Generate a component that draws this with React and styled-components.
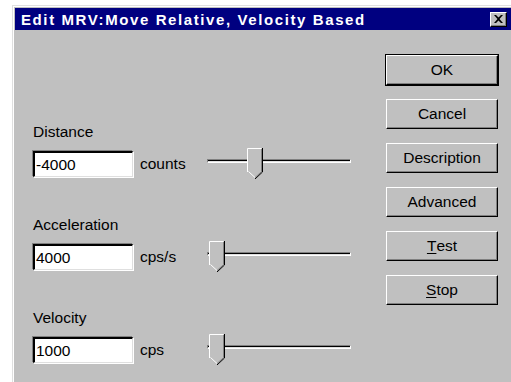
import React from "react"
import styled, { createGlobalStyle } from "styled-components"

const Global = createGlobalStyle`
  html, body {
    margin: 0;
    padding: 0;
    background: #fff;
    overflow: hidden;
  }
`

const fields = [
  { label: "Distance", value: "-4000", unit: "counts", pos: 40 },
  { label: "Acceleration", value: "4000", unit: "cps/s", pos: 2 },
  { label: "Velocity", value: "1000", unit: "cps", pos: 2 },
]

const buttons = [
  { text: "OK", isDefault: true },
  { text: "Cancel" },
  { text: "Description" },
  { text: "Advanced" },
  { text: "Test", key: "T" },
  { text: "Stop", key: "S" },
]

const Thumb = ({ pos }) => (
  <ThumbSvg style={{ left: pos }} width="16" height="31" viewBox="0 0 16 31">
    <path d="M0.5 0.5 H15.5 V24 L8 31 L0.5 24 Z" fill="#c0c0c0" />
    <path d="M0.5 24 V0.5 H14.5" fill="none" stroke="#fff" strokeWidth="1" />
    <path d="M1.5 23.5 L8 29.5" fill="none" stroke="#fff" strokeWidth="1" />
    <path d="M15.5 0 V24 L8 31" fill="none" stroke="#000" strokeWidth="1" />
    <path d="M14.5 1 V23.6 L8 29.6" fill="none" stroke="#808080" strokeWidth="1" />
  </ThumbSvg>
)

const App = () => {
  return (
    <Page>
      <Global />
      <Dialog>
        <TitleBar>
          <Title>Edit MRV:Move Relative, Velocity Based</Title>
          <CloseBtn>
            <svg width="9" height="8" viewBox="0 0 9 8">
              <path d="M0 0h2l2.5 2.5L7 0h2L5.5 4 9 8H7L4.5 5.5 2 8H0l3.5-4z" fill="#000" />
            </svg>
          </CloseBtn>
        </TitleBar>
        <Body>
          <Fields>
            {fields.map(f => (
              <Field key={f.label}>
                <Label>{f.label}</Label>
                <Row>
                  <Input>{f.value}</Input>
                  <Unit>{f.unit}</Unit>
                  <Slider>
                    <Track />
                    <Thumb pos={f.pos} />
                  </Slider>
                </Row>
              </Field>
            ))}
          </Fields>
          <Buttons>
            {buttons.map(b => (
              <Button key={b.text} isDefault={b.isDefault}>
                {b.key ? (
                  <>
                    <u>{b.key}</u>
                    {b.text.slice(1)}
                  </>
                ) : (
                  b.text
                )}
              </Button>
            ))}
          </Buttons>
        </Body>
      </Dialog>
    </Page>
  )
}

export default App

const Page = styled.div`
  padding: 5px 0 0 12px;
  width: 511px;
  height: 382px;
  box-sizing: border-box;
  overflow: hidden;
  font-family: "Liberation Sans", Arial, sans-serif;
`

const Dialog = styled.div`
  width: 499px;
  height: 377px;
  background: #c0c0c0;
  border-top: 1px solid #dfdfdf;
  border-left: 1px solid #dfdfdf;
  box-shadow: inset 1px 1px 0 #fff;
  padding: 2px 0 0 2px;
  box-sizing: border-box;
`

const TitleBar = styled.div`
  height: 22px;
  background: #000080;
  display: flex;
  align-items: center;
  justify-content: space-between;
  padding: 0 4px 0 6px;
`

const Title = styled.div`
  color: #fff;
  font-weight: bold;
  font-size: 15px;
  letter-spacing: 1.6px;
`

const CloseBtn = styled.div`
  width: 17px;
  height: 15px;
  box-sizing: border-box;
  background: #c0c0c0;
  border-top: 1px solid #fff;
  border-left: 1px solid #fff;
  border-right: 1px solid #000;
  border-bottom: 1px solid #000;
  box-shadow: inset -1px -1px 0 #808080;
  display: flex;
  align-items: center;
  justify-content: center;
`

const Body = styled.div`
  display: flex;
  justify-content: space-between;
`

const Fields = styled.div`
  display: flex;
  flex-direction: column;
  gap: 37px;
  padding: 93px 0 0 18px;
`

const Field = styled.div`
  display: flex;
  flex-direction: column;
  gap: 8px;
`

const Label = styled.div`
  font-size: 15.5px;
  line-height: 17px;
  color: #000;
`

const Row = styled.div`
  display: flex;
  align-items: center;
`

const Input = styled.div`
  width: 100px;
  height: 26px;
  box-sizing: border-box;
  background: #fff;
  border-top: 2px solid #000;
  border-left: 2px solid #000;
  border-right: 1px solid #dfdfdf;
  border-bottom: 1px solid #dfdfdf;
  box-shadow: -1px -1px 0 #808080, 1px 1px 0 #fff;
  font-size: 15.5px;
  line-height: 23px;
  padding-left: 1px;
  color: #000;
`

const Unit = styled.div`
  width: 67px;
  padding-left: 7px;
  font-size: 15.5px;
  color: #000;
`

const Slider = styled.div`
  position: relative;
  width: 144px;
  height: 31px;
`

const Track = styled.div`
  position: absolute;
  left: 0;
  right: 0;
  top: 11px;
  height: 4px;
  box-sizing: border-box;
  border-top: 1px solid #808080;
  border-left: 1px solid #808080;
  border-bottom: 1px solid #fff;
  border-right: 1px solid #fff;
  background: #000;
  box-shadow: inset 0 -1px 0 #dfdfdf;
`

const ThumbSvg = styled.svg`
  position: absolute;
  top: 0;
  display: block;
`

const Buttons = styled.div`
  display: flex;
  flex-direction: column;
  gap: 14px;
  padding: 25px 13px 0 0;
`

const Button = styled.div`
  width: 112px;
  height: 30px;
  box-sizing: border-box;
  background: #c0c0c0;
  border-top: 1px solid #fff;
  border-left: 1px solid #fff;
  border-right: 1px solid #000;
  border-bottom: 1px solid #000;
  box-shadow: inset -1px -1px 0 #808080;
  outline: ${p => (p.isDefault ? "1px solid #000" : "none")};
  display: flex;
  align-items: center;
  justify-content: center;
  font-size: 15.5px;
  color: #000;

  u {
    text-decoration-thickness: 1px;
    text-underline-offset: 2px;
  }
`
